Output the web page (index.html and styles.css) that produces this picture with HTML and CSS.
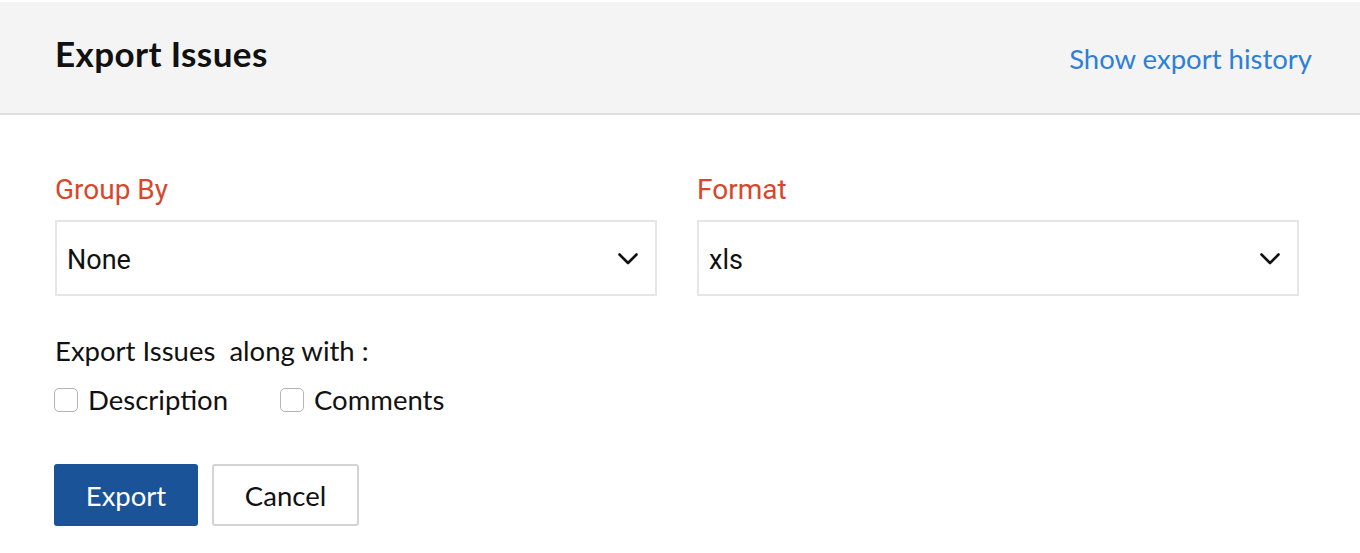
FILE: index.html
```html
<!DOCTYPE html>
<html lang="en">
<head>
<meta charset="utf-8">
<title>Export Issues</title>
<link rel="stylesheet" href="styles.css">
</head>
<body>
<div class="dialog">
  <header class="dialog-header">
    <h1 class="dialog-title">Export Issues</h1>
    <a class="history-link" href="#">Show export history</a>
  </header>
  <main class="dialog-body">
    <div class="fields">
      <div class="field">
        <label class="field-label">Group By</label>
        <div class="select">
          <span class="select-value">None</span>
          <svg class="chevron" width="20" height="12" viewBox="0 0 20 12"><path d="M1.5 1.5 L10 10 L18.5 1.5" fill="none" stroke="#111" stroke-width="2.6" stroke-linecap="round" stroke-linejoin="round"/></svg>
        </div>
      </div>
      <div class="field">
        <label class="field-label">Format</label>
        <div class="select">
          <span class="select-value">xls</span>
          <svg class="chevron" width="20" height="12" viewBox="0 0 20 12"><path d="M1.5 1.5 L10 10 L18.5 1.5" fill="none" stroke="#111" stroke-width="2.6" stroke-linecap="round" stroke-linejoin="round"/></svg>
        </div>
      </div>
    </div>
    <p class="along">Export Issues&nbsp; along with :</p>
    <div class="checks">
      <label class="check"><span class="box"></span>Description</label>
      <label class="check"><span class="box"></span>Comments</label>
    </div>
    <div class="actions">
      <button class="btn btn-primary" type="button">Export</button>
      <button class="btn btn-secondary" type="button">Cancel</button>
    </div>
  </main>
</div>
</body>
</html>
```

FILE: styles.css
```css
* { box-sizing: border-box; }
html, body { margin: 0; padding: 0; background: #fff; }
body {
  font-family: "Lato", "Open Sans", sans-serif;
  color: #111;
}
.dialog { padding-top: 2px; }
.dialog-header {
  height: 113px;
  background: #f4f4f4;
  border-bottom: 2px solid #dedede;
  display: flex;
  justify-content: space-between;
  align-items: flex-start;
  padding: 0 48px 0 55px;
}
.dialog-title {
  margin: 0;
  padding-top: 31px;
  font-size: 35px;
  font-weight: 700;
  line-height: 40px;
  letter-spacing: 0.4px;
  color: #111;
}
.history-link {
  padding-top: 40px;
  font-size: 27.5px;
  line-height: 34px;
  color: #2d7fd8;
  text-decoration: none;
}
.dialog-body { padding: 58px 55px 0 55px; }
.fields {
  display: grid;
  grid-template-columns: 602px 602px;
  column-gap: 40px;
}
.field-label {
  display: block;
  font-family: "Roboto", sans-serif;
  font-size: 28px;
  line-height: 34px;
  color: #d8472c;
  margin-bottom: 13px;
}
.select {
  height: 76px;
  border: 2px solid #e6e6e6;
  display: flex;
  align-items: center;
  justify-content: space-between;
  padding: 0 17px 0 10px;
}
.select-value {
  font-family: "Roboto", sans-serif;
  font-size: 27px;
  padding-top: 3px;
  color: #111;
}
.chevron { display: block; margin-top: 2px; }
.along {
  margin: 39px 0 0 0;
  font-size: 27.5px;
  line-height: 32px;
  color: #111;
}
.checks {
  display: flex;
  gap: 52px;
  margin-top: 17px;
  margin-left: -1px;
}
.check {
  display: flex;
  align-items: center;
  gap: 10px;
  font-size: 27.5px;
  line-height: 32px;
  color: #111;
}
.box {
  width: 24px;
  height: 24px;
  border: 1px solid #b4b4b4;
  border-radius: 5px;
  background: #fff;
}
.actions {
  display: flex;
  gap: 14px;
  margin-top: 48px;
  margin-left: -1px;
}
.btn {
  height: 62px;
  border-radius: 3px;
  font-family: "Lato", sans-serif;
  font-size: 27.5px;
  padding: 0;
  cursor: pointer;
}
.btn-primary {
  width: 144px;
  background: #1b5398;
  border: none;
  color: #fff;
}
.btn-secondary {
  width: 147px;
  background: #fff;
  border: 2px solid #d4d4d4;
  color: #111;
}
```
